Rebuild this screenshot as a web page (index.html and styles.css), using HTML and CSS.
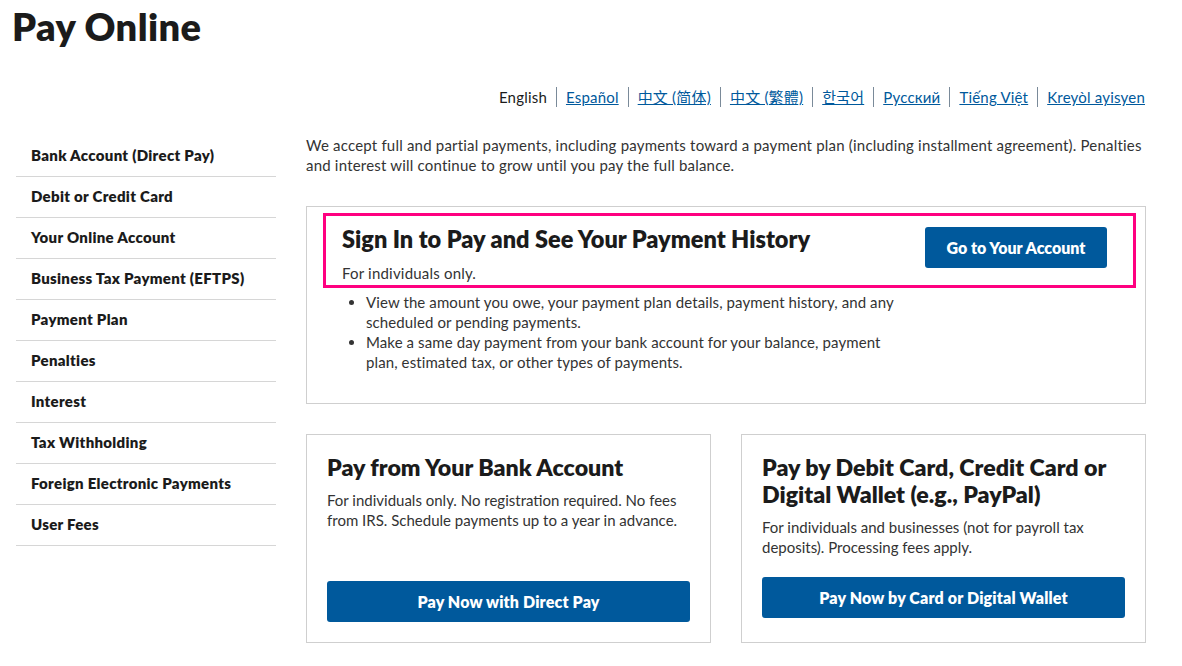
FILE: index.html
```html
<!DOCTYPE html>
<html lang="en">
<head>
<meta charset="utf-8">
<title>Pay Online</title>
<link rel="stylesheet" href="styles.css">
</head>
<body>
<div class="page">
  <h1 class="title">Pay Online</h1>
  <nav class="langs">
    <span class="lang current">English</span>
    <a class="lang" href="#">Español</a>
    <a class="lang" href="#">中文 (简体)</a>
    <a class="lang" href="#">中文 (繁體)</a>
    <a class="lang" href="#">한국어</a>
    <a class="lang" href="#">Русский</a>
    <a class="lang" href="#">Tiếng Việt</a>
    <a class="lang" href="#">Kreyòl ayisyen</a>
  </nav>
  <div class="layout">
    <aside class="sidebar">
      <ul class="side-list">
        <li class="side-item">Bank Account (Direct Pay)</li>
        <li class="side-item">Debit or Credit Card</li>
        <li class="side-item">Your Online Account</li>
        <li class="side-item">Business Tax Payment (EFTPS)</li>
        <li class="side-item">Payment Plan</li>
        <li class="side-item">Penalties</li>
        <li class="side-item">Interest</li>
        <li class="side-item">Tax Withholding</li>
        <li class="side-item">Foreign Electronic Payments</li>
        <li class="side-item">User Fees</li>
      </ul>
    </aside>
    <main class="main">
      <p class="intro">We accept full and partial payments, including payments toward a payment plan (including installment agreement). Penalties and interest will continue to grow until you pay the full balance.</p>
      <section class="account-box">
        <div class="account-head">
          <div class="account-text">
            <h2 class="account-title">Sign In to Pay and See Your Payment History</h2>
            <p class="account-sub">For individuals only.</p>
          </div>
          <a class="btn btn-account" href="#">Go to Your Account</a>
        </div>
        <ul class="bullets">
          <li>View the amount you owe, your payment plan details, payment history, and any scheduled or pending payments.</li>
          <li>Make a same day payment from your bank account for your balance, payment plan, estimated tax, or other types of payments.</li>
        </ul>
      </section>
      <div class="cards">
        <section class="card card-bank">
          <h2 class="card-title">Pay from Your Bank Account</h2>
          <p class="card-text">For individuals only. No registration required. No fees from IRS. Schedule payments up to a year in advance.</p>
          <a class="btn btn-wide" href="#">Pay Now with Direct Pay</a>
        </section>
        <section class="card card-debit">
          <h2 class="card-title">Pay by Debit Card, Credit Card or Digital Wallet (e.g., PayPal)</h2>
          <p class="card-text">For individuals and businesses (not for payroll tax deposits). Processing fees apply.</p>
          <a class="btn btn-wide" href="#">Pay Now by Card or Digital Wallet</a>
        </section>
      </div>
    </main>
  </div>
</div>
</body>
</html>
```
FILE: styles.css
```css
* { box-sizing: border-box; }
html, body { margin: 0; padding: 0; background: #fff; }
body {
  font-family: Lato, "Noto Sans CJK SC", sans-serif;
  color: #1b1b1b;
  font-size: 15px;
}
.page { width: 1182px; height: 666px; overflow: hidden; }
.title {
  margin: 0;
  padding: 2px 0 0 12px;
  font-size: 38px;
  font-weight: 800;
  line-height: 48px;
  letter-spacing: 0.4px;
  color: #1b1b1b;
}
.langs {
  display: flex;
  justify-content: flex-end;
  padding: 37px 37px 0 0;
  font-size: 15px;
  line-height: 20px;
  letter-spacing: 0.2px;
}
.lang {
  padding: 0 9px;
  border-left: 1px solid #7a8a99;
  color: #00599c;
  text-decoration: underline;
}
.lang:last-child { padding-right: 0; }
.lang.current { border-left: none; color: #1b1b1b; text-decoration: none; }
.layout {
  display: grid;
  grid-template-columns: 260px 840px;
  column-gap: 30px;
  padding: 28px 0 0 16px;
}
.side-list { list-style: none; margin: 1px 0 0; padding: 0; }
.side-item {
  height: 41px;
  padding: 10px 15px 0;
  border-bottom: 1px solid #d6d6d6;
  font-weight: 800;
  font-size: 15px;
  line-height: 18px;
  letter-spacing: 0.3px;
  color: #1b1b1b;
}
.main { display: flex; flex-direction: column; }
.intro {
  margin: 0 0 31px;
  font-size: 15px;
  line-height: 20px;
  color: #333;
  letter-spacing: 0.2px;
}
.account-box {
  border: 1px solid #cfcfcf;
  padding: 6px 9px 31px 16px;
}
.account-head {
  display: flex;
  justify-content: space-between;
  align-items: flex-start;
  border: 3px solid #ff0080;
  padding: 9px 26px 2px 16px;
}
.account-title {
  margin: 0;
  font-size: 23.5px;
  line-height: 28px;
  font-weight: 800;
}
.account-sub {
  margin: 10px 0 0;
  font-size: 15px;
  line-height: 20px;
  color: #333;
  letter-spacing: 0.2px;
}
.btn {
  display: flex;
  align-items: center;
  justify-content: center;
  background: #00599c;
  color: #fff;
  font-weight: 800;
  font-size: 16px;
  letter-spacing: 0.15px;
  text-decoration: none;
  border-radius: 3px;
  height: 41px;
}
.btn-account { width: 182px; margin-top: 2px; letter-spacing: 0; }
.bullets {
  margin: 4px 0 0;
  padding-left: 43px;
  width: 583px;
  font-size: 15px;
  line-height: 20px;
  color: #333;
  letter-spacing: 0.1px;
}
.cards {
  display: grid;
  grid-template-columns: 1fr 1fr;
  column-gap: 30px;
  margin-top: 30px;
}
.card {
  display: flex;
  flex-direction: column;
  border: 1px solid #cfcfcf;
  padding: 19px 20px 20px;
  height: 209px;
}
.card-title {
  margin: 0;
  font-size: 23.2px;
  line-height: 27px;
  font-weight: 800;
}
.card-text {
  margin: 9px 0 0;
  font-size: 15px;
  line-height: 20px;
  color: #333;
}
.btn-wide { width: 100%; }
.card-bank .btn-wide { margin-top: auto; }
.card-debit .btn-wide { margin-top: 20px; }
```
